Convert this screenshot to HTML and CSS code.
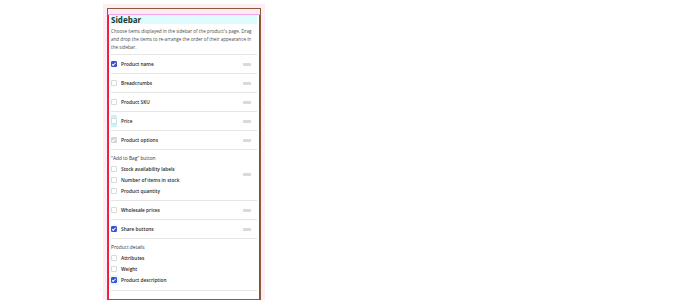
FILE: index.html
```html
<!DOCTYPE html>
<html>
<head>
<meta charset="utf-8">
<title>Sidebar</title>
<link rel="stylesheet" href="styles.css">
</head>
<body>
<div class="panel">
    <div class="panel-top"></div>
    <div class="panel-body">
        <h2 class="title">Sidebar</h2>
        <p class="desc">Choose items displayed in the sidebar of the product's page. Drag and drop the items to re-arrange the order of their appearance in the sidebar.</p>
        <ul class="items">
            <li class="row"><label class="opt"><span class="box on"></span>Product name</label><span class="grip"></span></li>
            <li class="row"><label class="opt"><span class="box"></span>Breadcrumbs</label><span class="grip"></span></li>
            <li class="row"><label class="opt"><span class="box"></span>Product SKU</label><span class="grip"></span></li>
            <li class="row"><label class="opt"><span class="box hl"></span>Price</label><span class="grip"></span></li>
            <li class="row"><label class="opt"><span class="box off"></span>Product options</label><span class="grip"></span></li>
            <li class="row group">
                <div class="group-list">
                    <div class="group-name">"Add to Bag" button</div>
                    <label class="opt sub"><span class="box"></span>Stock availability labels</label>
                    <label class="opt sub"><span class="box"></span>Number of items in stock</label>
                    <label class="opt sub"><span class="box"></span>Product quantity</label>
                </div>
                <span class="grip"></span>
            </li>
            <li class="row"><label class="opt"><span class="box"></span>Wholesale prices</label><span class="grip"></span></li>
            <li class="row"><label class="opt"><span class="box on"></span>Share buttons</label><span class="grip"></span></li>
            <li class="row group last">
                <div class="group-list">
                    <div class="group-name">Product details</div>
                    <label class="opt sub"><span class="box"></span>Attributes</label>
                    <label class="opt sub"><span class="box"></span>Weight</label>
                    <label class="opt sub"><span class="box on pad"></span>Product description</label>
                </div>
            </li>
        </ul>
    </div>
</div>
</body>
</html>
```

FILE: styles.css
```css
* { margin: 0; padding: 0; box-sizing: border-box; }
body { background: #fff; font-family: "Open Sans", "Liberation Sans", sans-serif; color: #222; }
ul { list-style: none; }

.panel { width: 154px; height: 292px; margin: 8px 0 0 107px; border: 1px solid #8b5a3c; box-shadow: 0 0 0 4px #fdeef6; display: flex; flex-direction: column; }
.panel-top { height: 6px; background: #fdeaf4; border-bottom: 1px solid #f2a8e8; }
.panel-body { flex: 1; border-left: 1px solid #ea1f3d; border-right: 1px solid #ea1f3d; padding: 0 2px; }

.title { height: 9px; line-height: 9px; background: #e0fbfd; font-size: 8px; font-weight: 700; color: #163a3a; }
.desc { margin-top: 3px; padding-right: 1px; font-size: 4.6px; line-height: 8px; color: #4a4a4a; height: 24px; }

.items { margin-top: 3px; border-top: 1px solid #e6e6e6; }
.row { height: 19px; border-bottom: 1px solid #e6e6e6; display: flex; align-items: center; justify-content: space-between; }
.row.group { height: 51px; padding: 3px 0 4px; }
.row.group.last { height: 52px; padding-bottom: 5px; }
.group-list { display: flex; flex-direction: column; align-self: stretch; }
.group-name { height: 10px; line-height: 10px; font-size: 4.8px; color: #333; }

.opt { display: flex; align-items: center; font-size: 4.8px; font-weight: 600; color: #2a2a2a; }
.opt.sub { height: 11px; }
.box { width: 6px; height: 6px; margin: 0 4px 0 0; border: 1px solid #dadada; border-radius: 1px; background: #fff; position: relative; }
.box.on { background: #3f4fd4; border-color: #3f4fd4; }
.box.off { background: #d4d4d4; border-color: #d4d4d4; }
.box.on::after, .box.off::after { content: ""; position: absolute; left: 1.3px; top: 0.2px; width: 1.4px; height: 2.6px; border: solid #fff; border-width: 0 0.8px 0.8px 0; transform: rotate(45deg); }
.box.hl { box-shadow: 0 -3px 0 0 #c4f6f8, 0 3px 0 0 #c4f6f8; }
.box.pad { box-shadow: 0 0 0 2px #e2fbfd; }

.grip { width: 8px; height: 3px; margin-right: 6px; background: #dadada; border-radius: 0.5px; }
```
